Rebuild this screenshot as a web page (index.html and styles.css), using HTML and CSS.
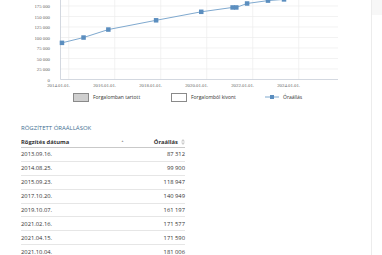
FILE: index.html
```html
<!DOCTYPE html>
<html lang="hu">
<head>
<meta charset="utf-8">
<title>Óraállások</title>
<link rel="stylesheet" href="styles.css">
</head>
<body>
<div class="page">
  <div class="main">
    <svg class="chart" width="371" height="90" viewBox="0 0 371 90">
      <g class="grid">
        <line x1="60.5" y1="69" x2="338" y2="69"/>
        <line x1="60.5" y1="58.5" x2="338" y2="58.5"/>
        <line x1="60.5" y1="48" x2="338" y2="48"/>
        <line x1="60.5" y1="37.5" x2="338" y2="37.5"/>
        <line x1="60.5" y1="27" x2="338" y2="27"/>
        <line x1="60.5" y1="16.5" x2="338" y2="16.5"/>
        <line x1="60.5" y1="6" x2="338" y2="6"/>
        <line x1="68.7" y1="0" x2="68.7" y2="79.5"/>
        <line x1="114.7" y1="0" x2="114.7" y2="79.5"/>
        <line x1="160.7" y1="0" x2="160.7" y2="79.5"/>
        <line x1="206.7" y1="0" x2="206.7" y2="79.5"/>
        <line x1="252.7" y1="0" x2="252.7" y2="79.5"/>
        <line x1="298.7" y1="0" x2="298.7" y2="79.5"/>
      </g>
      <g class="axis">
        <line x1="60.5" y1="0" x2="60.5" y2="79.5"/>
        <line x1="60.5" y1="79.5" x2="338" y2="79.5"/>
      </g>
      <g class="ylabels">
        <text x="50" y="8">175 000</text>
        <text x="50" y="18.5">150 000</text>
        <text x="50" y="29">125 000</text>
        <text x="50" y="39.5">100 000</text>
        <text x="50" y="50">75 000</text>
        <text x="50" y="60.5">50 000</text>
        <text x="50" y="71">25 000</text>
        <text x="50" y="81.5">0</text>
      </g>
      <g class="xlabels">
        <text x="70" y="87">2014.01.01.</text>
        <text x="116" y="87">2016.01.01.</text>
        <text x="162" y="87">2018.01.01.</text>
        <text x="208" y="87">2020.01.01.</text>
        <text x="254" y="87">2022.01.01.</text>
        <text x="300" y="87">2024.01.01.</text>
      </g>
      <polyline class="series" points="61.96,42.83 83.56,37.54 108.37,29.54 156.1,20.3 201.25,11.8 232.6,7.44 236.3,7.43 247.1,3.48 268,0.6 284,-0.6 300,-3"/>
      <g class="markers">
        <rect x="59.7" y="40.6" width="4.5" height="4.5"/>
        <rect x="81.3" y="35.3" width="4.5" height="4.5"/>
        <rect x="106.1" y="27.3" width="4.5" height="4.5"/>
        <rect x="153.85" y="18.05" width="4.5" height="4.5"/>
        <rect x="199" y="9.55" width="4.5" height="4.5"/>
        <rect x="230.35" y="5.2" width="4.5" height="4.5"/>
        <rect x="234.05" y="5.2" width="4.5" height="4.5"/>
        <rect x="244.85" y="1.25" width="4.5" height="4.5"/>
        <rect x="265.75" y="-1.65" width="4.5" height="4.5"/>
        <rect x="281.75" y="-2.85" width="4.5" height="4.5"/>
      </g>
    </svg>

    <div class="legend">
      <div class="legend-item"><span class="swatch swatch-gray"></span><span>Forgalomban tartott</span></div>
      <div class="legend-item"><span class="swatch swatch-white"></span><span>Forgalomból kivont</span></div>
      <div class="legend-item">
        <svg class="line-icon" width="14" height="6" viewBox="0 0 14 6"><line x1="0" y1="3" x2="14" y2="3"/><rect x="5" y="1" width="4" height="4"/></svg>
        <span>Óraállás</span>
      </div>
    </div>

    <h3 class="title">RÖGZÍTETT ÓRAÁLLÁSOK</h3>

    <table class="readings">
      <thead>
        <tr>
          <th class="col-date">Rögzítés dátuma<span class="sort-up">▲</span></th>
          <th class="col-val">Óraállás<svg class="sort-both" width="4" height="6" viewBox="0 0 4 6"><path d="M0 2.4 L2 0 L4 2.4Z M0 3.6 L2 6 L4 3.6Z"/></svg></th>
        </tr>
      </thead>
      <tbody>
        <tr><td>2013.09.16.</td><td class="num">87 312</td></tr>
        <tr><td>2014.08.25.</td><td class="num">99 900</td></tr>
        <tr><td>2015.09.23.</td><td class="num">118 947</td></tr>
        <tr><td>2017.10.20.</td><td class="num">140 949</td></tr>
        <tr><td>2019.10.07.</td><td class="num">161 197</td></tr>
        <tr><td>2021.02.16.</td><td class="num">171 577</td></tr>
        <tr><td>2021.04.15.</td><td class="num">171 590</td></tr>
        <tr><td>2021.10.04.</td><td class="num">181 006</td></tr>
      </tbody>
    </table>
  </div>
  <div class="side"><div class="side-top"></div></div>
</div>
</body>
</html>
```

FILE: styles.css
```css
html, body {
  margin: 0;
  padding: 0;
  background: #fff;
  overflow: hidden;
}

body {
  font-family: "Open Sans", "Liberation Sans", sans-serif;
  color: #333;
}

.page {
  display: flex;
  width: 382px;
  height: 255px;
}

.main {
  width: 371px;
  border-right: 1px solid #ececec;
  flex: none;
}

.side {
  flex: 1;
}

.side-top {
  height: 15px;
  background: #f7f7f7;
}

.chart {
  display: block;
  overflow: hidden;
}

.grid line {
  stroke: #ececec;
  stroke-width: 0.7;
}

.axis line {
  stroke: #c8ced8;
  stroke-width: 0.8;
}

.ylabels text,
.xlabels text {
  font-family: "Liberation Serif", serif;
  font-size: 4.8px;
  fill: #666;
  text-anchor: end;
}

.series {
  fill: none;
  stroke: #7fa9cf;
  stroke-width: 1;
}

.markers rect {
  fill: #5b8ebf;
}

.legend {
  display: grid;
  grid-template-columns: 98px 94px auto;
  align-items: center;
  padding-left: 73px;
  height: 14px;
  font-size: 5px;
  color: #333;
}

.legend-item {
  display: flex;
  align-items: center;
  gap: 4px;
}

.swatch {
  display: block;
  width: 14px;
  height: 7px;
  border: 0.8px solid #8a8a8a;
}

.swatch-gray {
  background: #cfcfcf;
}

.swatch-white {
  background: #fff;
}

.line-icon line {
  stroke: #7fa9cf;
  stroke-width: 1;
}

.line-icon rect {
  fill: #5b8ebf;
}

.title {
  margin: 20px 0 0 21px;
  font-size: 6px;
  font-weight: 400;
  color: #3f6f92;
  line-height: 8px;
}

.readings {
  margin: 4px 0 0 21px;
  width: 164px;
  border-collapse: collapse;
  font-size: 5.8px;
}

.readings th {
  font-weight: 700;
  text-align: left;
  height: 11px;
  padding: 0;
  border-bottom: 0.8px solid #c9c9c9;
  vertical-align: middle;
}

.readings th.col-date {
  width: 103px;
}

.readings th.col-val {
  text-align: right;
}

.sort-up {
  float: right;
  font-size: 3px;
  line-height: 6px;
  color: #999;
}

.sort-both {
  margin-left: 3px;
  vertical-align: middle;
}

.sort-both path {
  fill: #ccc;
}

.readings td {
  height: 12.9px;
  padding: 0;
  border-bottom: 0.8px solid #e6e6e6;
  vertical-align: middle;
  font-weight: 400;
}

.readings td.num {
  text-align: right;
}
```
